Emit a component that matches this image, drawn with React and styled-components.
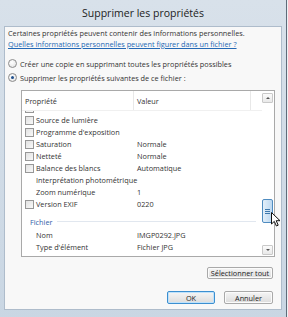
import React, { useLayoutEffect, useRef } from 'react';
import styled, { createGlobalStyle } from 'styled-components';

const GlobalStyle = createGlobalStyle`
  html, body {
    margin: 0;
    padding: 0;
  }
  body {
    width: 288px;
    height: 317px;
    overflow: hidden;
    background: #e9edf1;
    font-family: 'Open Sans', 'Noto Sans', 'DejaVu Sans', sans-serif;
  }
`;

const Screen = styled.div`
  position: relative;
  display: flex;
  width: 288px;
  height: 317px;
  overflow: hidden;
`;

const Window = styled.div`
  flex: none;
  width: 286px;
  height: 324px; /* the frame runs on below the picture */
  display: flex;
  flex-direction: column;
  padding: 0 4px;
  box-sizing: border-box;
  background: linear-gradient(180deg, #d8e1ea 0%, #c9d6e3 100%);
`;

const Behind = styled.div`
  flex: 1;
  background: #eef1f4;
  border-left: 1px solid #5f6c7a;
`;

const TitleBar = styled.div`
  height: 26px;
  flex: none;
  display: flex;
  align-items: center;
  justify-content: center;
  font-size: 10.5px;
  color: #1c1c1c;
`;

const Content = styled.div`
  height: 284px;
  flex: none;
  box-sizing: border-box;
  display: flex;
  flex-direction: column;
  padding: 1px 3px 0 3px;
  border: 1px solid #aebccb;
  background: #f8f8f8;
  font-size: 7.3px;
  color: #333;
`;

const Line = styled.p`
  margin: 0;
  line-height: 11px;
  white-space: nowrap;
`;

const Link = styled.a`
  color: #2468b4;
  text-decoration: underline;
`;

const RadioRow = styled.label`
  display: flex;
  align-items: center;
  gap: 3px;
  height: 11px;
  margin-top: ${p => p.$mt}px;
  white-space: nowrap;
`;

const Radio = styled.span`
  position: relative;
  width: 9px;
  height: 9px;
  box-sizing: border-box;
  border-radius: 50%;
  border: 1px solid #8c8c8c;
  background: radial-gradient(circle at 40% 35%, #ffffff 0%, #e6e6e6 80%);
  &::after {
    content: '';
    display: ${p => (p.$checked ? 'block' : 'none')};
    position: absolute;
    left: 2px;
    top: 2px;
    width: 3px;
    height: 3px;
    border-radius: 50%;
    background: #1f4f8c;
  }
`;

const ListBox = styled.div`
  margin: 7px 3px 0 13px;
  height: 167px;
  flex: none;
  box-sizing: border-box;
  display: flex;
  border: 1px solid #a9a9a9;
  background: #ffffff;
`;

const Table = styled.div`
  width: 240px;
  flex: none;
  display: flex;
  flex-direction: column;
`;

const Header = styled.div`
  height: 20px;
  flex: none;
  display: flex;
  box-sizing: border-box;
  border-bottom: 1px solid #f0f0f0;
`;

const HeaderCell = styled.div`
  width: ${p => p.$w}px;
  flex: none;
  box-sizing: border-box;
  display: flex;
  align-items: center;
  padding-left: 3px;
  border-right: 1px solid #e8e8e8;
  color: #333;
`;

const Body = styled.div`
  flex: 1;
  overflow: hidden;
  position: relative;
`;

const Row = styled.div`
  display: grid;
  grid-template-columns: 112px 1fr;
  align-items: center;
  height: 12px;
  white-space: nowrap;
`;

const NameCell = styled.div`
  display: flex;
  align-items: center;
  gap: 2px;
  padding-left: ${p => (p.$box ? 3 : 14)}px;
`;

const ValueCell = styled.div`
  padding-left: 3px;
`;

const Check = styled.span`
  width: 9px;
  height: 9px;
  flex: none;
  box-sizing: border-box;
  border: 1px solid #979797;
  background: linear-gradient(135deg, #e2e2e2 0%, #f8f8f8 100%);
`;

const GroupHeader = styled.div`
  height: 19px;
  box-sizing: border-box;
  display: flex;
  align-items: center;
  gap: 4px;
  padding: 4px 6px 0 8px;
  color: #2f5ea8;
  &::after {
    content: '';
    flex: 1;
    height: 1px;
    background: #e1e7ef;
  }
`;

const Scrollbar = styled.div`
  width: 11px;
  flex: none;
  display: flex;
  flex-direction: column;
  margin: 2px 1px 1px 0;
`;

const ScrollButton = styled.div`
  height: 10px;
  flex: none;
  box-sizing: border-box;
  display: flex;
  align-items: center;
  justify-content: center;
  border: 1px solid #c9c9c9;
  border-radius: 1px;
  background: linear-gradient(180deg, #fbfbfb 0%, #e9e9e9 100%);
`;

const Arrow = styled.span`
  width: 0;
  height: 0;
  border-left: 2px solid transparent;
  border-right: 2px solid transparent;
  ${p => (p.$down ? 'border-top: 2px solid #555;' : 'border-bottom: 2px solid #555;')}
`;

const Track = styled.div`
  flex: 1;
  display: flex;
  flex-direction: column;
`;

const Thumb = styled.div`
  margin-top: ${p => p.$offset}px;
  height: 24px;
  box-sizing: border-box;
  display: flex;
  align-items: center;
  justify-content: center;
  border: 1px solid #4f8cc0;
  border-radius: 2px;
  background: linear-gradient(90deg, #e3eff9 0%, #bcd8f1 100%);
  &::after {
    content: '';
    width: 5px;
    height: 5px;
    background: repeating-linear-gradient(180deg, #3d78ad 0 1px, transparent 1px 2px);
  }
`;

const Buttons = styled.div`
  display: flex;
  justify-content: flex-end;
  gap: 9px;
  margin: ${p => p.$mt}px 5px 0 0;
`;

const Button = styled.button`
  width: ${p => p.$w}px;
  height: ${p => p.$h}px;
  padding: 0;
  font-family: inherit;
  font-size: 7.3px;
  color: #222;
  border: 1px solid ${p => (p.$default ? '#3c8fd0' : '#a9a9a9')};
  border-radius: 2px;
  background: linear-gradient(180deg, #f5f5f5 0%, #e9e9e9 50%, #dcdcdc 100%);
  box-shadow: ${p => (p.$default ? 'inset 0 0 0 1px #bfe2fb' : 'inset 0 0 0 1px #fbfbfb')};
`;

const Cursor = styled.svg`
  position: absolute;
  left: 271px;
  top: 212px;
`;

const rows = [
  { name: 'Luminosité', box: true },
  { name: 'Source de lumière', box: true },
  { name: "Programme d'exposition", box: true },
  { name: 'Saturation', value: 'Normale', box: true },
  { name: 'Netteté', value: 'Normale', box: true },
  { name: 'Balance des blancs', value: 'Automatique', box: true },
  { name: 'Interprétation photométrique' },
  { name: 'Zoom numérique', value: '1' },
  { name: 'Version EXIF', value: '0220', box: true },
];

const fileRows = [
  { name: 'Nom', value: 'IMGP0292.JPG' },
  { name: "Type d'élément", value: 'Fichier JPG' },
  { name: 'Chemin du dossier', value: 'C:\\Utilisateurs\\Bureau' },
];

const PropRow = ({ name, value, box }) => (
  <Row>
    <NameCell $box={box}>
      {box && <Check />}
      {name}
    </NameCell>
    <ValueCell>{value}</ValueCell>
  </Row>
);

export default function App() {
  const bodyRef = useRef(null);

  useLayoutEffect(() => {
    // the list is scrolled part way into the first row
    if (bodyRef.current) bodyRef.current.scrollTop = 9;
  }, []);

  return (
    <Screen>
      <GlobalStyle />
      <Window>
        <TitleBar>Supprimer les propriétés</TitleBar>
        <Content>
          <Line>Certaines propriétés peuvent contenir des informations personnelles.</Line>
          <Line>
            <Link>Quelles informations personnelles peuvent figurer dans un fichier ?</Link>
          </Line>
          <RadioRow $mt={8}>
            <Radio />
            Créer une copie en supprimant toutes les propriétés possibles
          </RadioRow>
          <RadioRow $mt={3}>
            <Radio $checked />
            Supprimer les propriétés suivantes de ce fichier :
          </RadioRow>
          <ListBox>
            <Table>
              <Header>
                <HeaderCell $w={112}>Propriété</HeaderCell>
                <HeaderCell $w={117}>Valeur</HeaderCell>
              </Header>
              <Body ref={bodyRef}>
                {rows.map(r => (
                  <PropRow key={r.name} {...r} />
                ))}
                <GroupHeader>Fichier</GroupHeader>
                {fileRows.map(r => (
                  <PropRow key={r.name} {...r} />
                ))}
              </Body>
            </Table>
            <Scrollbar>
              <ScrollButton>
                <Arrow />
              </ScrollButton>
              <Track>
                <Thumb $offset={96} />
              </Track>
              <ScrollButton>
                <Arrow $down />
              </ScrollButton>
            </Scrollbar>
          </ListBox>
          <Buttons $mt={10}>
            <Button $w={66} $h={12}>Sélectionner tout</Button>
          </Buttons>
          <Buttons $mt={12}>
            <Button $w={48} $h={13} $default>OK</Button>
            <Button $w={49} $h={13}>Annuler</Button>
          </Buttons>
        </Content>
      </Window>
      <Behind />
      <Cursor width="12" height="16" viewBox="0 0 12 16">
        <path d="M0.5 0.5 L0.5 12 L3.3 9.4 L5.4 14 L7.2 13.2 L5.2 8.7 L9 8.7 Z" fill="#fff" stroke="#111" strokeWidth="1" strokeLinejoin="round" />
      </Cursor>
    </Screen>
  );
}
